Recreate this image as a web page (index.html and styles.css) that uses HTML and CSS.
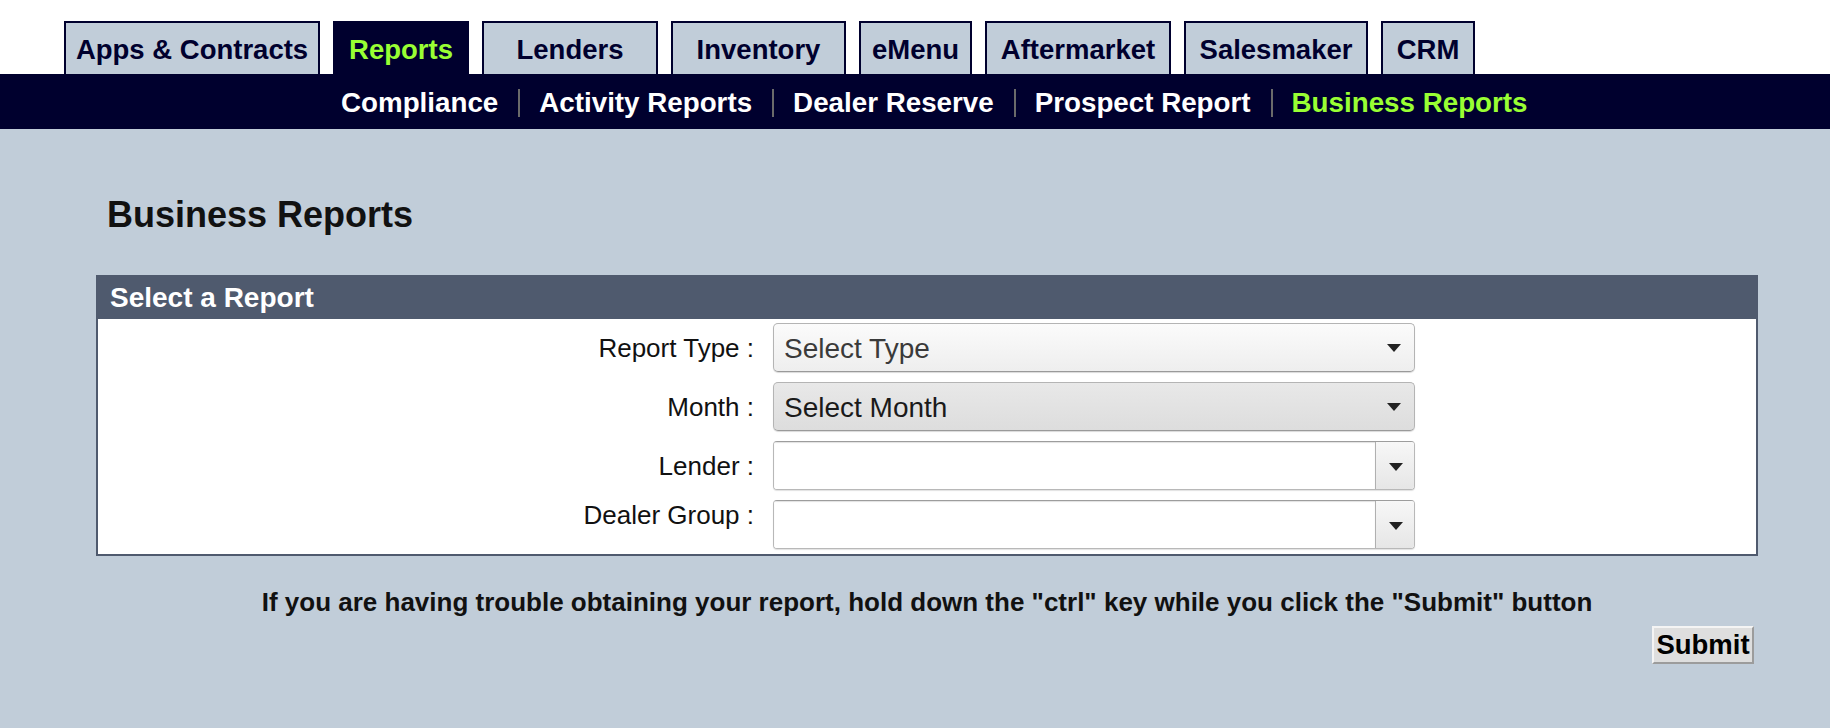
FILE: index.html
```html
<!DOCTYPE html>
<html lang="en">
<head>
<meta charset="utf-8">
<title>Business Reports</title>
<link rel="stylesheet" href="styles.css">
</head>
<body>
<header class="top">
  <nav class="tabs">
    <a class="tab tab-apps">Apps &amp; Contracts</a>
    <a class="tab tab-reports active">Reports</a>
    <a class="tab tab-lenders">Lenders</a>
    <a class="tab tab-inventory">Inventory</a>
    <a class="tab tab-emenu">eMenu</a>
    <a class="tab tab-after">Aftermarket</a>
    <a class="tab tab-sales">Salesmaker</a>
    <a class="tab tab-crm">CRM</a>
  </nav>
  <nav class="subnav">
    <a class="sub">Compliance</a>
    <span class="sep"></span>
    <a class="sub">Activity Reports</a>
    <span class="sep"></span>
    <a class="sub">Dealer Reserve</a>
    <span class="sep"></span>
    <a class="sub">Prospect Report</a>
    <span class="sep"></span>
    <a class="sub current">Business Reports</a>
  </nav>
</header>
<main class="content">
  <h1 class="title">Business Reports</h1>
  <section class="panel">
    <div class="panel-head">Select a Report</div>
    <div class="panel-body">
      <div class="row">
        <label class="label">Report Type :</label>
        <div class="select select-light">
          <span class="select-text muted">Select Type</span>
          <span class="arrow"></span>
        </div>
      </div>
      <div class="row">
        <label class="label">Month :</label>
        <div class="select select-dark">
          <span class="select-text">Select Month</span>
          <span class="arrow"></span>
        </div>
      </div>
      <div class="row">
        <label class="label">Lender :</label>
        <div class="combo">
          <span class="combo-field"></span>
          <span class="combo-btn"><span class="arrow"></span></span>
        </div>
      </div>
      <div class="row">
        <label class="label label-top">Dealer Group :</label>
        <div class="combo">
          <span class="combo-field"></span>
          <span class="combo-btn"><span class="arrow"></span></span>
        </div>
      </div>
    </div>
  </section>
  <p class="note">If you are having trouble obtaining your report, hold down the "ctrl" key while you click the "Submit" button</p>
  <div class="actions">
    <button class="submit" type="button">Submit</button>
  </div>
</main>
</body>
</html>
```

FILE: styles.css
```css
* { box-sizing: border-box; }

html, body {
  margin: 0;
  padding: 0;
  height: 100%;
}

body {
  font-family: "Liberation Sans", Arial, Helvetica, sans-serif;
  background: #c1cdd9;
  color: #111;
  display: flex;
  flex-direction: column;
}

.top {
  background: #ffffff;
}

.tabs {
  display: flex;
  gap: 13px;
  padding: 21px 0 0 64px;
  height: 74px;
  align-items: stretch;
}

.tab {
  display: flex;
  align-items: center;
  justify-content: center;
  height: 53px;
  background: #c1cdd9;
  border: 2px solid #00002e;
  border-bottom: none;
  color: #00002e;
  font-weight: bold;
  font-size: 27.5px;
  padding-top: 3px;
  white-space: nowrap;
}

.tab.active {
  background: #00002e;
  color: #99ff33;
}

.tab-apps { width: 256px; }
.tab-reports { width: 136px; }
.tab-lenders { width: 176px; }
.tab-inventory { width: 175px; }
.tab-emenu { width: 113px; }
.tab-after { width: 186px; }
.tab-sales { width: 184px; }
.tab-crm { width: 94px; }

.subnav {
  background: #00002e;
  height: 55px;
  display: flex;
  align-items: center;
  padding-left: 341px;
  padding-top: 2px;
}

.sub {
  color: #ffffff;
  font-weight: bold;
  font-size: 27.75px;
  white-space: nowrap;
}

.sub.current {
  color: #99ff33;
}

.sep {
  width: 2px;
  height: 28px;
  background: #6a6a6a;
  margin: 0 19px 0 20px;
}

.content {
  flex: 1;
  padding: 0 72px 0 96px;
}

.title {
  margin: 66px 0 0 11px;
  font-size: 36px;
  line-height: 40px;
  font-weight: bold;
  color: #111;
}

.panel {
  margin-top: 40px;
  border: 2px solid #4f5a6e;
  background: #ffffff;
}

.panel-head {
  background: #4f5a6e;
  color: #ffffff;
  font-weight: bold;
  font-size: 28px;
  margin: -2px -2px 0;
  height: 44px;
  line-height: 46px;
  padding-left: 14px;
}

.panel-body {
  display: flex;
  flex-direction: column;
  gap: 10px;
  padding: 4px 0 5px;
}

.row {
  display: flex;
  align-items: center;
  height: 49px;
}

.label {
  width: 656px;
  text-align: right;
  font-size: 26px;
  color: #111;
  margin-right: 19px;
  white-space: nowrap;
  padding-top: 1px;
}

.label-top {
  align-self: flex-start;
  padding-top: 0;
}

.select {
  width: 642px;
  height: 49px;
  border: 1px solid #b4b4b4;
  border-bottom-color: #9a9a9a;
  border-radius: 5px;
  box-shadow: 0 1px 1px rgba(0, 0, 0, 0.15);
  display: flex;
  align-items: center;
  justify-content: space-between;
  padding: 0 11px 0 10px;
}

.select-light {
  background: linear-gradient(#fbfbfb, #eeeeee);
}

.select-dark {
  background: linear-gradient(#e8e8e8, #dddddd);
}

.select-text {
  font-size: 28px;
  color: #1a1a1a;
  white-space: nowrap;
  padding-top: 3px;
}

.select-text.muted {
  color: #3a3a3a;
}

.arrow {
  width: 0;
  height: 0;
  border-left: 7px solid transparent;
  border-right: 7px solid transparent;
  border-top: 8px solid #222;
  margin-right: 2px;
}

.combo {
  width: 642px;
  height: 49px;
  display: flex;
  border: 1px solid #b8b8b8;
  border-top-color: #9d9d9d;
  border-radius: 4px;
  box-shadow: 0 1px 1px rgba(0, 0, 0, 0.12);
  overflow: hidden;
}

.combo-field {
  flex: 1;
  background: #ffffff;
  box-shadow: inset 0 1px 1px rgba(0, 0, 0, 0.12);
}

.combo-btn {
  width: 39px;
  border-left: 1px solid #b0b0b0;
  background: linear-gradient(#f7f7f7, #e6e6e6);
  display: flex;
  align-items: center;
  justify-content: center;
}

.combo-btn .arrow {
  margin: 2px 0 0 1px;
}

.note {
  margin: 31px 0 0;
  text-align: center;
  font-weight: bold;
  font-size: 26px;
  line-height: 30px;
  color: #111;
}

.actions {
  display: flex;
  justify-content: flex-end;
  padding-right: 4px;
  margin-top: 9px;
}

.submit {
  font-family: "Liberation Sans", Arial, Helvetica, sans-serif;
  font-weight: bold;
  font-size: 27.5px;
  color: #000;
  background: #dedede;
  border: 2px solid;
  border-color: #f4f4f4 #9c9c9c #9c9c9c #f4f4f4;
  height: 38px;
  width: 102px;
  padding: 0;
  line-height: 34px;
}
```
